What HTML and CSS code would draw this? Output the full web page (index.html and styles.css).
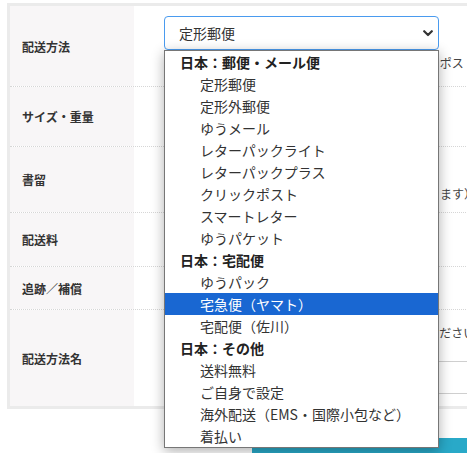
FILE: index.html
```html
<!DOCTYPE html>
<html lang="ja">
<head>
<meta charset="utf-8">
<title>配送方法の設定</title>
<link rel="stylesheet" href="styles.css">
</head>
<body>
<div class="settings">
  <div class="row row-method">
    <div class="label">配送方法</div>
    <div class="value">
      <div class="select-wrap">
        <div class="select">
          <span>定形郵便</span>
          <svg class="chev" width="10" height="7" viewBox="0 0 10 7"><path d="M1.2 1.2 L5 5 L8.8 1.2" fill="none" stroke="#333" stroke-width="2.2" stroke-linecap="round" stroke-linejoin="round"/></svg>
        </div>
        <ul class="dropdown">
          <li class="group">日本：郵便・メール便</li>
          <li class="opt">定形郵便</li>
          <li class="opt">定形外郵便</li>
          <li class="opt">ゆうメール</li>
          <li class="opt">レターパックライト</li>
          <li class="opt">レターパックプラス</li>
          <li class="opt">クリックポスト</li>
          <li class="opt">スマートレター</li>
          <li class="opt">ゆうパケット</li>
          <li class="group">日本：宅配便</li>
          <li class="opt">ゆうパック</li>
          <li class="opt selected">宅急便（ヤマト）</li>
          <li class="opt">宅配便（佐川）</li>
          <li class="group">日本：その他</li>
          <li class="opt">送料無料</li>
          <li class="opt">ご自身で設定</li>
          <li class="opt">海外配送（EMS・国際小包など）</li>
          <li class="opt">着払い</li>
        </ul>
      </div>
      <p class="note">※追跡可：ゆうパケット・レターパック・クリックポスト</p>
    </div>
  </div>
  <div class="row row-size">
    <div class="label">サイズ・重量</div>
    <div class="value center"><span class="plain">25g以内</span></div>
  </div>
  <div class="row row-registered">
    <div class="label">書留</div>
    <div class="value">
      <div class="check">書留を付ける</div>
      <p class="note">（書留を付けると別途追加料金がかかる場合があります）</p>
    </div>
  </div>
  <div class="row row-fee">
    <div class="label">配送料</div>
    <div class="value center"><span class="plain">84円</span></div>
  </div>
  <div class="row row-track">
    <div class="label">追跡／補償</div>
    <div class="value center"><span class="plain">なし</span></div>
  </div>
  <div class="row row-name">
    <div class="label">配送方法名</div>
    <div class="value">
      <p class="note">※購入者に表示される配送方法の名前を入力してください</p>
      <div class="text-input"></div>
    </div>
  </div>
</div>
<div class="actions"><div class="btn"></div></div>
</body>
</html>
```
FILE: styles.css
```css
html, body {
  margin: 0;
  padding: 0;
  overflow: hidden;
  background: #fff;
}
body {
  width: 467px;
  height: 453px;
  font-family: "Noto Sans CJK JP", "Noto Sans", sans-serif;
  color: #333;
}
.settings {
  margin: 3px 0 0 7px;
  width: 600px;
  border: 3px solid #ebebeb;
}
.row {
  display: grid;
  grid-template-columns: 124px 1fr;
  box-sizing: border-box;
  border-bottom: 1px dotted #d6d6d6;
}
.row:last-child {
  border-bottom: none;
}
.row-method { height: 81px; }
.row-size { height: 60px; }
.row-registered { height: 66px; }
.row-fee { height: 54px; }
.row-track { height: 43px; }
.row-name { height: 96px; }
.label {
  display: flex;
  align-items: center;
  padding-left: 12px;
  background: #f8f6f7;
  font-size: 12px;
  font-weight: bold;
  color: #333;
}
.value {
  padding-left: 30px;
  box-sizing: border-box;
}
.value.center {
  display: flex;
  align-items: center;
}
.plain {
  font-size: 13px;
}
.row-method .value {
  padding-top: 10px;
}
.select-wrap {
  position: relative;
  width: 275px;
}
.select {
  height: 34px;
  box-sizing: border-box;
  border: 1px solid #4a9bef;
  border-radius: 4px;
  display: flex;
  align-items: center;
  justify-content: space-between;
  padding: 0 5px 0 14px;
  font-size: 14px;
  color: #333;
  background: #fff;
}
.chev {
  display: block;
}
.dropdown {
  position: absolute;
  top: 100%;
  left: 0;
  z-index: 10;
  width: 275px;
  box-sizing: border-box;
  margin: 0;
  padding: 0;
  list-style: none;
  background: #fff;
  border: 1px solid #767676;
  box-shadow: 0 3px 12px rgba(0, 0, 0, 0.32);
}
.dropdown li {
  height: 22px;
  line-height: 22px;
  font-size: 14px;
  white-space: nowrap;
}
.group {
  padding-left: 15px;
  font-weight: bold;
  color: #222;
}
.opt {
  padding-left: 35px;
  color: #333;
}
.opt.selected {
  background: #1967d2;
  color: #fff;
}
.note {
  margin: 0;
  font-size: 12px;
  line-height: 16px;
  color: #444;
  white-space: nowrap;
}
.row-method .note {
  margin-top: 5px;
}
.row-registered .value {
  padding-top: 10px;
}
.check {
  height: 22px;
  line-height: 22px;
  font-size: 13px;
  margin-bottom: 7px;
}
.row-name .value {
  padding-top: 15px;
}
.text-input {
  margin-top: 20px;
  height: 33px;
  box-sizing: border-box;
  border: 1px solid #cfcfcf;
  background: #fff;
}
.actions {
  margin-top: 29px;
  padding-left: 252px;
}
.btn {
  width: 260px;
  height: 50px;
  background: #29a9c8;
}
```
